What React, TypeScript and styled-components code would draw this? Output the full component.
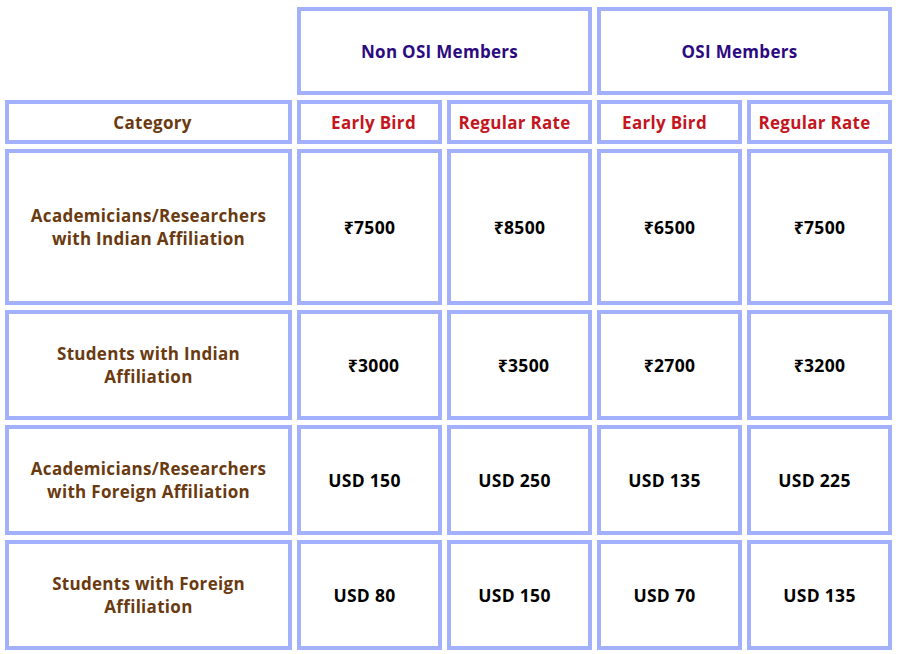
import React from "react";
import styled, { createGlobalStyle } from "styled-components";

const GlobalStyle = createGlobalStyle`
  html, body { margin: 0; padding: 0; background: #ffffff; }
  body { font-family: "Open Sans", "Noto Sans", "DejaVu Sans", sans-serif; }
`;

const Page = styled.div`
  padding: 2px 0 0 0;
  width: 898px;
`;

const Table = styled.table`
  border-collapse: separate;
  border-spacing: 5px;
  table-layout: fixed;
  width: 897px;
`;

type Shift = "left" | "right" | "none";

const Cell = styled.td<{ $h?: number; $shift?: Shift }>`
  border: 4px solid #a3b1fd;
  box-sizing: border-box;
  height: ${(p) => p.$h ?? 110}px;
  padding: 0
    ${(p) => (p.$shift === "left" ? 14 : p.$shift === "right" ? 0 : 4)}px 0
    ${(p) => (p.$shift === "right" ? 8 : p.$shift === "left" ? 4 : 4)}px;
  text-align: center;
  vertical-align: middle;
  font-size: 17px;
  font-weight: 700;
  letter-spacing: 0.3px;
  line-height: 23px;
  color: #000000;
`;

const BlankCell = styled.td`
  border: none;
  padding: 0;
`;

const GroupHead = styled(Cell).attrs({ as: "th" })`
  color: #2c0a80;
`;

const SubHead = styled(Cell).attrs({ as: "th" })`
  color: #c3161e;
`;

const CategoryHead = styled(Cell).attrs({ as: "th" })`
  color: #6a3a10;
`;

const CategoryCell = styled(Cell)`
  color: #6a3a10;
`;

const PriceCell = styled(Cell)`
  font-size: 17.5px;
`;

type Price = { v: string; s?: Shift };
type Row = { label: React.ReactNode; prices: Price[]; h: number };

const rows: Row[] = [
  {
    label: (
      <>
        Academicians/Researchers
        <br />
        with Indian Affiliation
      </>
    ),
    prices: [{ v: "₹7500" }, { v: "₹8500" }, { v: "₹6500" }, { v: "₹7500" }],
    h: 156,
  },
  {
    label: (
      <>
        Students with Indian
        <br />
        Affiliation
      </>
    ),
    prices: [
      { v: "₹3000", s: "right" },
      { v: "₹3500", s: "right" },
      { v: "₹2700" },
      { v: "₹3200" },
    ],
    h: 110,
  },
  {
    label: (
      <>
        Academicians/Researchers
        <br />
        with Foreign Affiliation
      </>
    ),
    prices: [
      { v: "USD 150", s: "left" },
      { v: "USD 250", s: "left" },
      { v: "USD 135", s: "left" },
      { v: "USD 225", s: "left" },
    ],
    h: 110,
  },
  {
    label: (
      <>
        Students with Foreign
        <br />
        Affiliation
      </>
    ),
    prices: [
      { v: "USD 80", s: "left" },
      { v: "USD 150", s: "left" },
      { v: "USD 70", s: "left" },
      { v: "USD 135" },
    ],
    h: 110,
  },
];

export default function App() {
  return (
    <Page>
      <GlobalStyle />
      <Table>
        <colgroup>
          <col style={{ width: 287 }} />
          <col style={{ width: 145 }} />
          <col style={{ width: 145 }} />
          <col style={{ width: 145 }} />
          <col style={{ width: 145 }} />
        </colgroup>
        <thead>
          <tr>
            <BlankCell />
            <GroupHead colSpan={2} $h={88} $shift="left">
              Non OSI Members
            </GroupHead>
            <GroupHead colSpan={2} $h={88} $shift="left">
              OSI Members
            </GroupHead>
          </tr>
          <tr>
            <CategoryHead $h={44} $shift="right">
              Category
            </CategoryHead>
            <SubHead $h={44} $shift="right">
              Early Bird
            </SubHead>
            <SubHead $h={44} $shift="left">
              Regular Rate
            </SubHead>
            <SubHead $h={44} $shift="left">
              Early Bird
            </SubHead>
            <SubHead $h={44} $shift="left">
              Regular Rate
            </SubHead>
          </tr>
        </thead>
        <tbody>
          {rows.map((r, i) => (
            <tr key={i}>
              <CategoryCell $h={r.h}>{r.label}</CategoryCell>
              {r.prices.map((p, j) => (
                <PriceCell key={j} $h={r.h} $shift={p.s}>
                  {p.v}
                </PriceCell>
              ))}
            </tr>
          ))}
        </tbody>
      </Table>
    </Page>
  );
}
